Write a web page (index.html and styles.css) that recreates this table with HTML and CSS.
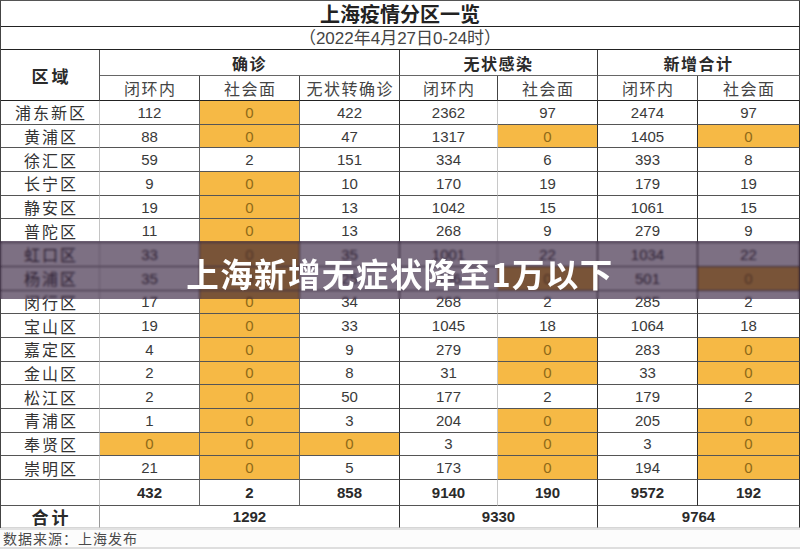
FILE: index.html
```html
<!DOCTYPE html>
<html lang="zh-CN">
<head>
<meta charset="utf-8">
<title>上海疫情分区一览</title>
<link rel="stylesheet" href="styles.css">
</head>
<body>
<div class="page">
  <div class="sheet">
    <div class="c ttl">上海疫情分区一览</div>
    <div class="c sub">（2022年4月27日0-24时）</div>

    <div class="c hd area rs2">区域</div>
    <div class="c hd grp s3">确诊</div>
    <div class="c hd grp s2">无状感染</div>
    <div class="c hd grp s2">新增合计</div>

    <div class="c sh">闭环内</div>
    <div class="c sh">社会面</div>
    <div class="c sh dk">无状转确诊</div>
    <div class="c sh">闭环内</div>
    <div class="c sh dk">社会面</div>
    <div class="c sh">闭环内</div>
    <div class="c sh dk">社会面</div>

    <div class="c nm">浦东新区</div><div class="c n">112</div><div class="c n o">0</div><div class="c n dk">422</div><div class="c n lt">2362</div><div class="c n dk">97</div><div class="c n dk">2474</div><div class="c n dk">97</div>
    <div class="c nm">黄浦区</div><div class="c n">88</div><div class="c n o">0</div><div class="c n dk">47</div><div class="c n lt">1317</div><div class="c n dk o">0</div><div class="c n dk">1405</div><div class="c n dk o">0</div>
    <div class="c nm">徐汇区</div><div class="c n">59</div><div class="c n">2</div><div class="c n dk">151</div><div class="c n lt">334</div><div class="c n dk">6</div><div class="c n dk">393</div><div class="c n dk">8</div>
    <div class="c nm">长宁区</div><div class="c n">9</div><div class="c n o">0</div><div class="c n dk">10</div><div class="c n lt">170</div><div class="c n dk">19</div><div class="c n dk">179</div><div class="c n dk">19</div>
    <div class="c nm">静安区</div><div class="c n">19</div><div class="c n o">0</div><div class="c n dk">13</div><div class="c n lt">1042</div><div class="c n dk">15</div><div class="c n dk">1061</div><div class="c n dk">15</div>
    <div class="c nm">普陀区</div><div class="c n">11</div><div class="c n o">0</div><div class="c n dk">13</div><div class="c n lt">268</div><div class="c n dk">9</div><div class="c n dk">279</div><div class="c n dk">9</div>
    <div class="c nm">虹口区</div><div class="c n">33</div><div class="c n o">0</div><div class="c n dk">35</div><div class="c n lt">1001</div><div class="c n dk">22</div><div class="c n dk">1034</div><div class="c n dk">22</div>
    <div class="c nm">杨浦区</div><div class="c n">35</div><div class="c n o">0</div><div class="c n dk">25</div><div class="c n lt">466</div><div class="c n dk o">0</div><div class="c n dk">501</div><div class="c n dk o">0</div>
    <div class="c nm">闵行区</div><div class="c n">17</div><div class="c n o">0</div><div class="c n dk">34</div><div class="c n lt">268</div><div class="c n dk">2</div><div class="c n dk">285</div><div class="c n dk">2</div>
    <div class="c nm">宝山区</div><div class="c n">19</div><div class="c n o">0</div><div class="c n dk">33</div><div class="c n lt">1045</div><div class="c n dk">18</div><div class="c n dk">1064</div><div class="c n dk">18</div>
    <div class="c nm">嘉定区</div><div class="c n">4</div><div class="c n o">0</div><div class="c n dk">9</div><div class="c n lt">279</div><div class="c n dk o">0</div><div class="c n dk">283</div><div class="c n dk o">0</div>
    <div class="c nm">金山区</div><div class="c n">2</div><div class="c n o">0</div><div class="c n dk">8</div><div class="c n lt">31</div><div class="c n dk o">0</div><div class="c n dk">33</div><div class="c n dk o">0</div>
    <div class="c nm">松江区</div><div class="c n">2</div><div class="c n o">0</div><div class="c n dk">50</div><div class="c n lt">177</div><div class="c n dk">2</div><div class="c n dk">179</div><div class="c n dk">2</div>
    <div class="c nm">青浦区</div><div class="c n">1</div><div class="c n o">0</div><div class="c n dk">3</div><div class="c n lt">204</div><div class="c n dk o">0</div><div class="c n dk">205</div><div class="c n dk o">0</div>
    <div class="c nm">奉贤区</div><div class="c n o">0</div><div class="c n o">0</div><div class="c n dk o">0</div><div class="c n lt">3</div><div class="c n dk o">0</div><div class="c n dk">3</div><div class="c n dk o">0</div>
    <div class="c nm">崇明区</div><div class="c n">21</div><div class="c n o">0</div><div class="c n dk">5</div><div class="c n lt">173</div><div class="c n dk o">0</div><div class="c n dk">194</div><div class="c n dk o">0</div>

    <div class="c nm"></div><div class="c n b">432</div><div class="c n b">2</div><div class="c n b dk">858</div><div class="c n b lt">9140</div><div class="c n b dk">190</div><div class="c n b dk">9572</div><div class="c n b dk">192</div>

    <div class="c nm b sum">合计</div>
    <div class="c n b s3 dk">1292</div>
    <div class="c n b s2 dk">9330</div>
    <div class="c n b s2 dk">9764</div>
  </div>
  <div class="foot">数据来源：上海发布</div>

  <div class="banner">上海新增无症状降至1万以下</div>
</div>
</body>
</html>
```

FILE: styles.css
```css
html, body {
  margin: 0;
  padding: 0;
  background: #ffffff;
}

.page {
  position: relative;
  width: 800px;
  height: 549px;
  overflow: hidden;
  font-family: "Liberation Sans", "Noto Sans CJK SC", sans-serif;
  color: #333333;
  background: #ffffff;
}

.sheet {
  display: grid;
  grid-template-columns: 99px 100px 100px 100px 98px 100px 100px 102px;
  grid-template-rows: 26px 23px 26px 25px repeat(16, 23.7px) 26px 22px;
  border-top: 1px solid #555555;
  border-left: 1px solid #444444;
  box-sizing: border-box;
  width: 800px;
}

.c {
  box-sizing: border-box;
  display: flex;
  align-items: center;
  justify-content: center;
  border-right: 1px solid #3a3a3a;
  border-bottom: 1px solid #555555;
  white-space: nowrap;
  line-height: 1;
}

.ttl {
  grid-column: 1 / -1;
  font-size: 20px;
  font-weight: 700;
  color: #222222;
  border-bottom: 1px solid #222222;
  padding-top: 2px;
}

.sub {
  grid-column: 1 / -1;
  font-size: 17px;
  color: #444444;
  border-bottom: 1px solid #222222;
  padding-top: 1px;
}

.s2 { grid-column: span 2; }
.s3 { grid-column: span 3; }
.rs2 { grid-row: span 2; }

.hd {
  font-family: "Noto Sans CJK SC", sans-serif;
  font-weight: 700;
  font-size: 16px;
  letter-spacing: 1.5px;
  color: #2a2a2a;
}

.area {
  font-size: 17px;
  letter-spacing: 3px;
  padding-left: 3px;
  border-right-color: #555555;
  border-bottom: 1px solid #222222;
}

.grp {
  border-bottom: 1px solid #666666;
  padding-top: 1px;
}

.sh {
  font-family: "Noto Sans CJK SC", sans-serif;
  font-size: 16px;
  letter-spacing: 1.5px;
  padding-left: 1.5px;
  color: #444444;
  border-bottom: 1px solid #222222;
  border-right-color: #444444;
}

.nm {
  font-family: "Noto Sans CJK SC", sans-serif;
  font-size: 16px;
  letter-spacing: 2px;
  padding-left: 2px;
  color: #333333;
  border-right-color: #c4c4c4;
}

.n {
  font-size: 15px;
  color: #3a3a3a;
  border-right-color: #666666;
}

.n.dk { border-right-color: #2e2e2e; }
.n.lt { border-right-color: #c8c8c8; }

.o {
  background: #f6b945;
  color: #8f6a18;
}

.b {
  font-weight: 700;
  color: #2a2a2a;
}

.sum {
  font-size: 17px;
  letter-spacing: 3px;
  padding-left: 3px;
  border-right-color: #9a9a9a;
  border-bottom-color: #d6d6d6;
}

.sheet > .c:nth-last-child(-n+3) {
  border-bottom-color: #d6d6d6;
}

.foot {
  box-sizing: border-box;
  height: 22px;
  border-top: 2px solid #e2e2e2;
  border-bottom: 3px solid #dedede;
  padding-left: 3px;
  font-family: "Noto Sans CJK SC", sans-serif;
  font-size: 14px;
  letter-spacing: 1px;
  line-height: 17px;
  color: #4a4a4a;
  background: #fcfcfc;
}

.banner {
  position: absolute;
  left: 0;
  right: 0;
  top: 241px;
  height: 58px;
  display: flex;
  align-items: center;
  justify-content: center;
  padding-top: 6px;
  box-sizing: border-box;
  background: rgba(38, 16, 48, 0.6);
  backdrop-filter: blur(1px);
  font-family: "Noto Sans CJK SC", sans-serif;
  font-weight: 700;
  font-size: 32.5px;
  letter-spacing: 1.4px;
  line-height: 1;
  color: #ffffff;
}
```
